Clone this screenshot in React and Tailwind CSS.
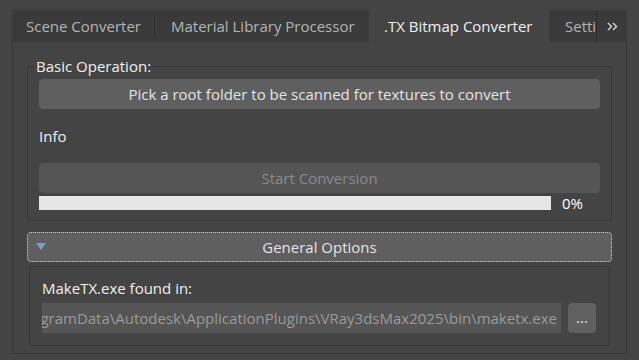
// App.jsx
const font = { fontFamily: '"Open Sans", "Noto Sans", sans-serif' };

const Tab = ({ label, active, sep, className = "" }) => (
  <div
    className={`relative flex items-center h-full shrink-0 ${
      active ? "bg-[#444444] text-[#f0f0f0]" : "text-[#b4b4b4]"
    } ${className}`}
  >
    {label}
    {sep && <span className="absolute right-0 top-[6px] h-[20px] w-px bg-[#2f2f2f]" />}
  </div>
);

export default function App() {
  return (
    <div
      className="w-[639px] h-[360px] bg-[#444444] pt-[10px] pl-3 pr-3 pb-[6px] flex flex-col text-[15px] overflow-hidden"
      style={font}
    >
      {/* tab bar */}
      <div className="h-8 bg-[#3a3a3a] flex shrink-0 overflow-hidden">
        <Tab label="Scene Converter" sep className="w-[143px] pl-[14px]" />
        <Tab label="Material Library Processor" className="w-[214px] pl-[16px]" />
        <Tab label=".TX Bitmap Converter" active className="w-[180px] pl-[15px]" />
        <div className="w-[48px] h-full overflow-hidden flex items-center pl-[16px] text-[#b4b4b4] whitespace-nowrap border-r border-[#2f2f2f]">
          Settings
        </div>
        <div className="flex-1 flex items-center justify-center">
          <svg width="11" height="9" viewBox="0 0 11 9" fill="none" stroke="#d8d8d8" strokeWidth="1.4">
            <path d="M1 1l3.5 3.5L1 8M6 1l3.5 3.5L6 8" />
          </svg>
        </div>
      </div>

      {/* panel */}
      <div className="flex-1 border-l border-r border-b border-[#363636] px-[14px] pt-[24px] flex flex-col">
        {/* group box */}
        <div className="relative border border-[#383838] rounded-[3px] px-[11px] pt-[12px] pb-[10px] flex flex-col">
          <span className="absolute -top-[12px] left-[6px] px-[2px] bg-[#444444] text-[#f0f0f0] leading-[22px]">
            Basic Operation:
          </span>
          <button className="h-[30px] rounded-[4px] bg-[#5f5f5f] text-[#e4e4e4]">
            Pick a root folder to be scanned for textures to convert
          </button>
          <div className="h-[54px] flex items-center text-[#f0f0f0] pl-[-1px]">Info</div>
          <button className="h-[30px] rounded-[4px] bg-[#555555] text-[#8a8a8a]">
            Start Conversion
          </button>
          <div className="flex items-center mt-[3px]">
            <div className="w-[512px] h-[14px] bg-[#e6e6e6]" />
            <span className="ml-[11px] text-[#ffffff] leading-[14px]">0%</span>
          </div>
        </div>

        {/* rollout */}
        <div className="mt-[11px] h-[30px] rounded-[4px] bg-[#5f5f5f] border border-dotted border-[#d0d0d0] flex items-center relative">
          <svg className="absolute left-[8px] top-[10px]" width="10" height="7" viewBox="0 0 10 7">
            <path d="M0 0h10L5 7z" fill="#7f9ad8" />
          </svg>
          <span className="flex-1 text-center text-[#e4e4e4]">General Options</span>
        </div>
        <div className="mt-[4px] mx-[2px] h-[80px] border border-[#363636] rounded-[3px] px-[12px] pt-[10px] flex flex-col">
          <div className="text-[#f0f0f0] leading-[22px]">MakeTX.exe found in:</div>
          <div className="mt-[4px] flex items-center">
            <div className="w-[519px] h-[30px] bg-[#555555] overflow-hidden flex justify-end items-center pr-[4px] whitespace-nowrap text-[#9a9a9a]">
              <span className="shrink-0">C:\ProgramData\Autodesk\ApplicationPlugins\VRay3dsMax2025\bin\maketx.exe</span>
            </div>
            <button className="ml-[7px] w-[28px] h-[30px] rounded-[4px] bg-[#606060] text-[#e0e0e0] leading-none pb-[2px]">
              ...
            </button>
          </div>
        </div>
      </div>
    </div>
  );
}
